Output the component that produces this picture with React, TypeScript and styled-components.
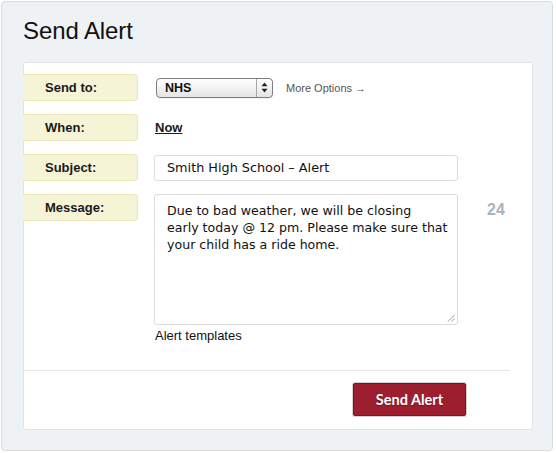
import React from "react";
import styled, { createGlobalStyle } from "styled-components";

const Global = createGlobalStyle`
  html, body { margin: 0; padding: 0; background: #ffffff; }
  body { font-family: "Liberation Sans", Arial, sans-serif; color: #111; }
`;

const Panel = styled.div`
  box-sizing: border-box;
  margin: 1px 3px 2px 1px;
  width: 552px;
  height: 450px;
  background: #eef2f5;
  border: 1px solid #dcdcdc;
  border-radius: 4px;
  padding: 0 20px 0 21px;
`;

const Title = styled.h1`
  margin: 0;
  padding-top: 14px;
  height: 46px;
  font-size: 24px;
  font-weight: normal;
  line-height: 30px;
  color: #111;
  letter-spacing: -0.1px;
`;

const Card = styled.div`
  box-sizing: border-box;
  width: 510px;
  height: 368px;
  background: #fff;
  border: 1px solid #dfe4e8;
  border-radius: 3px;
  padding-top: 11px;
`;

const Form = styled.div`
  display: grid;
  grid-template-columns: 115px 1fr;
  column-gap: 16px;
  row-gap: 13px;
  margin-left: -1px;
`;

const Label = styled.div<{ $top?: boolean }>`
  box-sizing: border-box;
  height: 27px;
  background: #f6f4d6;
  border: 1px solid #ebe6b8;
  border-left: none;
  border-radius: 0 4px 4px 0;
  padding-left: 22px;
  font-size: 13px;
  font-weight: bold;
  line-height: 25px;
  color: #1a1a1a;
  align-self: ${(p) => (p.$top ? "start" : "center")};
`;

const Field = styled.div`
  display: flex;
  align-items: center;
  gap: 13px;
`;

const SelectBox = styled.div`
  box-sizing: border-box;
  margin-left: 2px;
  width: 117px;
  height: 20px;
  border: 1px solid #7d7d7d;
  border-radius: 4px;
  background: linear-gradient(#ffffff, #f2f2f2 50%, #e4e4e4);
  display: flex;
  align-items: stretch;
  box-shadow: 0 1px 0 rgba(0, 0, 0, 0.05);
`;

const SelectValue = styled.div`
  flex: 1;
  padding-left: 8px;
  font-size: 12.5px;
  font-weight: bold;
  line-height: 18px;
  color: #111;
`;

const SelectArrows = styled.div`
  width: 15px;
  border-left: 1px solid #a8a8a8;
  display: flex;
  align-items: center;
  justify-content: center;
`;

const MoreLink = styled.a`
  font-size: 11px;
  color: #555;
  text-decoration: none;
`;

const NowLink = styled.a`
  font-size: 13px;
  font-weight: bold;
  color: #1a1a1a;
  text-decoration: underline;
  margin-left: 1px;
`;

const TextInput = styled.div`
  box-sizing: border-box;
  width: 304px;
  height: 26px;
  border: 1px solid #dcdcdc;
  border-radius: 3px;
  padding-left: 12px;
  font-family: "DejaVu Sans", Verdana, sans-serif;
  font-size: 12.8px;
  line-height: 24px;
  color: #111;
`;

const MessageWrap = styled.div`
  display: grid;
  grid-template-columns: 304px auto;
  column-gap: 29px;
  align-items: start;
`;

const TextArea = styled.div`
  position: relative;
  box-sizing: border-box;
  width: 304px;
  height: 131px;
  border: 1px solid #dcdcdc;
  border-radius: 3px;
  padding: 7px 6px 0 12px;
  font-family: "DejaVu Sans", Verdana, sans-serif;
  font-size: 12.6px;
  line-height: 17px;
  color: #111;
  white-space: nowrap;
`;

const Grip = styled.svg`
  position: absolute;
  right: 2px;
  bottom: 2px;
`;

const Counter = styled.div`
  padding-top: 7px;
  font-size: 16px;
  font-weight: bold;
  color: #aab2bd;
`;

const Templates = styled.div`
  margin-top: 3px;
  margin-left: 1px;
  font-size: 13px;
  color: #111;
`;

const Divider = styled.hr`
  margin: 27px 22px 0 0;
  border: none;
  border-top: 1px solid #e6e6e6;
  height: 0;
`;

const Footer = styled.div`
  display: flex;
  justify-content: flex-end;
  padding: 12px 66px 0 0;
`;

const Button = styled.button`
  box-sizing: border-box;
  width: 113px;
  height: 33px;
  background: #9d1f2f;
  border: 1px solid #7b1422;
  border-radius: 2px;
  box-shadow: 0 0 0 1px #d9d0d0;
  color: #fff;
  font-family: "Lato", "Open Sans", sans-serif;
  font-size: 14.5px;
  font-weight: bold;
  text-shadow: 0 1px 1px rgba(0, 0, 0, 0.35);
  cursor: pointer;
  padding: 0;
`;

const messageLines = [
  "Due to bad weather, we will be closing",
  "early today @ 12 pm. Please make sure that",
  "your child has a ride home.",
];

export default function App() {
  return (
    <>
      <Global />
      <Panel>
        <Title>Send Alert</Title>
        <Card>
          <Form>
            <Label>Send to:</Label>
            <Field>
              <SelectBox>
                <SelectValue>NHS</SelectValue>
                <SelectArrows>
                  <svg width="7" height="11" viewBox="0 0 7 11">
                    <path d="M3.5 0.5 L6.5 4.3 L0.5 4.3 Z" fill="#222" />
                    <path d="M3.5 10.5 L6.5 6.7 L0.5 6.7 Z" fill="#222" />
                  </svg>
                </SelectArrows>
              </SelectBox>
              <MoreLink href="#">More Options →</MoreLink>
            </Field>

            <Label>When:</Label>
            <Field>
              <NowLink href="#">Now</NowLink>
            </Field>

            <Label>Subject:</Label>
            <Field>
              <TextInput>Smith High School – Alert</TextInput>
            </Field>

            <Label $top>Message:</Label>
            <div>
              <MessageWrap>
                <TextArea>
                  {messageLines.map((line, i) => (
                    <React.Fragment key={i}>
                      {line}
                      {i < messageLines.length - 1 && <br />}
                    </React.Fragment>
                  ))}
                  <Grip width="8" height="8" viewBox="0 0 8 8">
                    <path d="M7.5 1 L1 7.5 M7.5 4.5 L4.5 7.5" stroke="#999" strokeWidth="1" />
                  </Grip>
                </TextArea>
                <Counter>24</Counter>
              </MessageWrap>
              <Templates>Alert templates</Templates>
            </div>
          </Form>
          <Divider />
          <Footer>
            <Button>Send Alert</Button>
          </Footer>
        </Card>
      </Panel>
    </>
  );
}
